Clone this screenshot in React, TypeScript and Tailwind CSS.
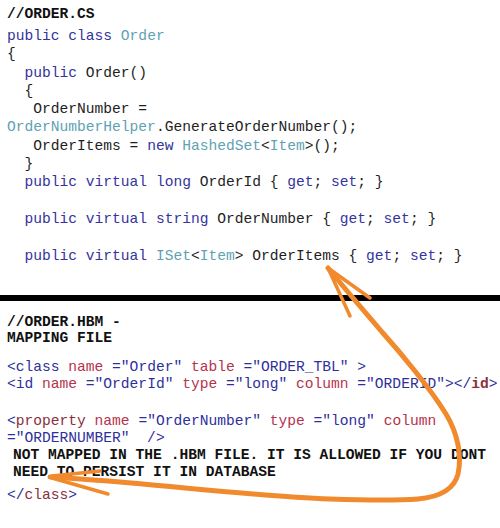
const kw = "text-[#34349c]";
const ty = "text-[#5ea2b3]";
const tx = "text-[#1e1e1e]";
const xa = "text-[#b5334c]";
const xv = "text-[#2f2f9c]";
const xe = "text-[#8a2f3c]";

function Line({ children, className = "" }: { children?: React.ReactNode; className?: string }) {
  return <div className={`whitespace-pre ${className}`}>{children}</div>;
}

export default function App() {
  return (
    <div className="relative w-[500px] h-[528px] overflow-hidden bg-white font-['Liberation_Mono',monospace] text-[14.6px] text-[#1e1e1e]">
      {/* Order.cs */}
      <section className="px-[7px] pt-[5px] leading-[18.3px]">
        <Line className="font-bold text-[#111] h-[22px] leading-[18px]">//ORDER.CS</Line>
        <Line>
          <span className={kw}>public class </span>
          <span className={ty}>Order</span>
        </Line>
        <Line>{"{"}</Line>
        <Line>
          {"  "}
          <span className={kw}>public </span>
          <span className={tx}>Order()</span>
        </Line>
        <Line>{"  {"}</Line>
        <Line>{"   OrderNumber ="}</Line>
        <Line>
          <span className={ty}>OrderNumberHelper</span>
          <span className={tx}>.GenerateOrderNumber();</span>
        </Line>
        <Line>
          {"   OrderItems = "}
          <span className={kw}>new </span>
          <span className={ty}>HashedSet</span>
          {"<"}
          <span className={ty}>Item</span>
          {">();"}
        </Line>
        <Line>{"  }"}</Line>
        <Line>
          {"  "}
          <span className={kw}>public virtual long </span>
          {"OrderId { "}
          <span className={kw}>get</span>
          {"; "}
          <span className={kw}>set</span>
          {"; }"}
        </Line>
        <Line> </Line>
        <Line>
          {"  "}
          <span className={kw}>public virtual string </span>
          {"OrderNumber { "}
          <span className={kw}>get</span>
          {"; "}
          <span className={kw}>set</span>
          {"; }"}
        </Line>
        <Line> </Line>
        <Line>
          {"  "}
          <span className={kw}>public virtual </span>
          <span className={ty}>ISet</span>
          {"<"}
          <span className={ty}>Item</span>
          {"> OrderItems { "}
          <span className={kw}>get</span>
          {"; "}
          <span className={kw}>set</span>
          {"; }"}
        </Line>
      </section>

      <div className="mt-[30px] h-[6px] bg-black" />

      {/* Order.hbm */}
      <section className="px-[7px] pt-[13px]">
        <div className="font-bold text-[#111] leading-[16px]">
          <Line>//ORDER.HBM -</Line>
          <Line>MAPPING FILE</Line>
        </div>
        <div className="mt-[13px] leading-[17px]">
          <Line>
            <span className={xv}>{"<class "}</span>
            <span className={xa}>name </span>
            <span className={xv}>{'="Order" '}</span>
            <span className={xa}>table </span>
            <span className={xv}>{'="ORDER_TBL" >'}</span>
          </Line>
          <Line>
            <span className={xv}>{"<id "}</span>
            <span className={xa}>name </span>
            <span className={xv}>{'="OrderId" '}</span>
            <span className={xa}>type </span>
            <span className={xv}>{'="long" '}</span>
            <span className={xa}>column </span>
            <span className={xv}>{'="ORDERID"></'}</span>
            <span className={`${xe} font-bold`}>id</span>
            <span className={xv}>{">"}</span>
          </Line>
        </div>
        <div className="mt-[20px] leading-[17px]">
          <Line>
            <span className={xv}>{"<"}</span>
            <span className={xe}>{"property "}</span>
            <span className={xa}>name </span>
            <span className={xv}>{'="OrderNumber" '}</span>
            <span className={xa}>type </span>
            <span className={xv}>{'="long" '}</span>
            <span className={xa}>column</span>
          </Line>
          <Line>
            <span className={xv}>{'="ORDERNUMBER"  />'}</span>
          </Line>
        </div>
        <div className="ml-[6px] font-bold text-[#111] leading-[17px]">
          <Line>NOT MAPPED IN THE .HBM FILE. IT IS ALLOWED IF YOU DONT</Line>
          <Line>NEED TO PERSIST IT IN DATABASE</Line>
        </div>
        <Line className="mt-[6px] leading-[17px]">
          <span className={xv}>{"</"}</span>
          <span className={xe}>class</span>
          <span className={xv}>{">"}</span>
        </Line>
      </section>

      {/* hand-drawn arrow */}
      <svg
        className="pointer-events-none absolute inset-0"
        width="500"
        height="528"
        viewBox="0 0 500 528"
        fill="none"
        stroke="#f08a2c"
        strokeLinecap="round"
        strokeLinejoin="round"
      >
        <path
          d="M328 268 C350 295 365 312 382 332 C400 352 430 388 446 414 C458 434 462 456 458 474 C454 490 440 497 418 499 C390 501 360 500 330 499 C260 496 190 488 120 482 C95 480 70 478 50 477"
          strokeWidth="5"
        />
        <path d="M328 268 L350 316" strokeWidth="3.5" />
        <path d="M328 268 L370 298" strokeWidth="3.5" />
        <path d="M52 476 L100 471" strokeWidth="3.5" />
        <path d="M52 478 L108 494" strokeWidth="3.5" />
      </svg>
    </div>
  );
}
